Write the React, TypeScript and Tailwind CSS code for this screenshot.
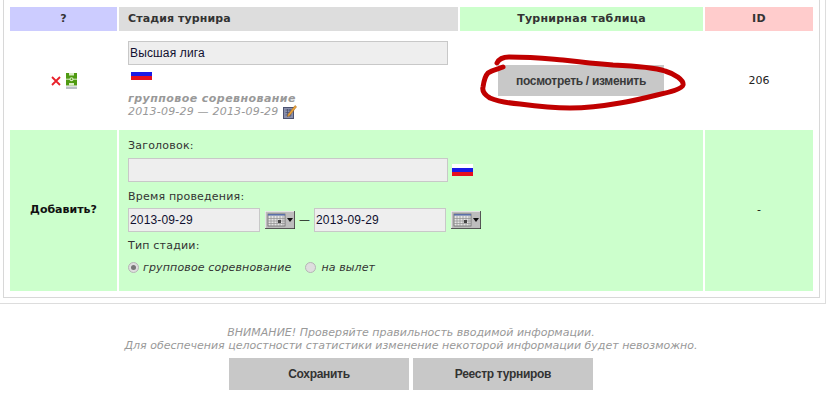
import React from "react";

const V = "[font-family:'DejaVu_Sans',Verdana,sans-serif]";
const A = "[font-family:'Liberation_Sans',Arial,sans-serif]";

function Flag() {
  return (
    <svg width="21" height="12" viewBox="0 0 21 12" className="block shrink-0">
      <rect width="21" height="4" fill="#fff" />
      <rect y="4" width="21" height="4" fill="#1a1ae6" />
      <rect y="8" width="21" height="4" fill="#e60f1e" />
    </svg>
  );
}

function Cal() {
  return (
    <svg width="30" height="18" viewBox="0 0 30 18" className="block shrink-0">
      <rect x="0" y="0" width="30" height="18" fill="#bdbdbd" />
      <path d="M0 0H30M0 0V18" stroke="#f0f0f0" strokeWidth="1.5" />
      <path d="M30 0V18H0" stroke="#333" strokeWidth="1.5" fill="none" />
      <rect x="3" y="3" width="17" height="12" fill="#e4e4e4" stroke="#6a6a6a" strokeWidth="0.8" />
      <rect x="3" y="3" width="17" height="1.6" fill="#5a6fa8" />
      <path d="M6 5v10M9 5v10M12 5v10M15 5v10M18 5v10M3 7.5h17M3 10h17M3 12.5h17" stroke="#8f8f8f" strokeWidth="0.7" />
      <rect x="13" y="9" width="3" height="3" fill="#444" />
      <path d="M22 7h6l-3 4z" fill="#111" />
    </svg>
  );
}

function Pitch() {
  return (
    <svg width="11" height="16" viewBox="0 0 11 16" className="block">
      <rect x="0" y="0" width="11" height="12.5" fill="#4f9a12" />
      <rect x="3" y="0" width="5" height="2.5" fill="#d9ecc4" />
      <rect x="3" y="10" width="5" height="2.5" fill="#d9ecc4" />
      <path d="M0 6.2h11" stroke="#d9ecc4" strokeWidth="1" />
      <circle cx="5.5" cy="6.2" r="2" fill="#d9ecc4" />
      <circle cx="5.5" cy="6.2" r="0.9" fill="#4f9a12" />
      <rect x="0" y="13.5" width="11" height="2.5" fill="#b9bfc4" />
    </svg>
  );
}

function Edit() {
  return (
    <svg width="14" height="15" viewBox="0 0 14 15" className="block shrink-0">
      <rect x="0.5" y="3.5" width="10" height="11" fill="#8a90ad" stroke="#4c5270" />
      <path d="M2.5 6h6M2.5 8.5h6M2.5 11h6M4.5 5v8M7 5v8" stroke="#454b68" strokeWidth="0.7" />
      <path d="M5 10.5 12 1.5l1.6 1.3-7 9-2.2 0.6z" fill="#e9a23b" stroke="#a5691c" strokeWidth="0.5" />
    </svg>
  );
}

function Radio({ on }: { on?: boolean }) {
  return (
    <span className="w-[11px] h-[11px] rounded-full border border-[#b5b5b5] bg-[#dedede] flex items-center justify-center shrink-0">
      {on && <span className="w-[5px] h-[5px] rounded-full bg-[#777]" />}
    </span>
  );
}

function Field({ value, className }: { value?: string; className: string }) {
  return (
    <div className={`${className} shrink-0 h-6 bg-[#eeeeee] border border-[#c8c8c8] pl-[1px] flex items-center text-[12px] tracking-[0.15px] text-[#101030] ${A}`}>
      {value}
    </div>
  );
}

export default function App() {
  return (
    <div className="w-[836px] h-[402px] overflow-hidden bg-white text-[#222]">
      <div className="w-[826px] h-[304px] border-r border-b border-[#dddddd]">
        <div className="ml-[3px] w-[817px] h-[298px] border-l border-r border-b border-[#d8d8d8] pt-[7px] pl-[6px]">
          <div className={`grid grid-cols-[107px_339px_243px_108px] grid-rows-[24px_95px_161px] gap-x-[2px] gap-y-[2px] ${V} text-[11px]`}>
            <div className="bg-[#ccccff] flex items-center justify-center pt-px font-bold text-[#333] tracking-[0.3px]">?</div>
            <div className="bg-[#dddddd] flex items-center pl-[9px] pt-px font-bold text-[#333] tracking-[0.1px]">Стадия турнира</div>
            <div className="bg-[#ccffcc] flex items-center justify-center pt-px font-bold text-[#333] tracking-[0.25px]">Турнирная таблица</div>
            <div className="bg-[#ffcccc] flex items-center justify-center pt-px font-bold text-[#333] tracking-[0.3px]">ID</div>

            <div className="flex items-center justify-center gap-[5px]">
              <svg width="10" height="10" viewBox="0 0 10 10" className="block"><path d="M1 1l8 8M9 1l-8 8" stroke="#e8202a" strokeWidth="1.8" /></svg>
              <Pitch />
            </div>
            <div className="pl-[9px] pt-[8px]">
              <Field value="Высшая лига" className="w-[320px]" />
              <div className="ml-[3px] mt-[3px]"><Flag /></div>
              <div className="mt-[12px] font-bold italic text-[#999] leading-[13px] tracking-[0.45px]">групповое соревнование</div>
              <div className="flex items-center gap-[5px] italic text-[#999] leading-[13px] -mt-[1px] tracking-[0.2px]">
                <span>2013-09-29 — 2013-09-29</span>
                <Edit />
              </div>
            </div>
            <div className="relative flex items-center justify-center">
              <div className={`-ml-[1px] w-[166px] h-[31px] bg-[#c8c8c8] flex items-center justify-center font-bold text-[#3a3a3a] text-[12px] ${A} tracking-[-0.3px]`}>
                посмотреть / изменить
              </div>
              <svg width="230" height="72" viewBox="0 0 230 72" className="absolute left-[15px] top-[10px]" fill="none">
                <path
                  d="M22 20C24 16 28 14 34 14C60 14 75 16 88 17C105 19 125 21 138 22C160 23 178 24 190 28C200 31 209 37 208 42C207 46 195 49 182 52C170 55 158 58 145 60C128 63 112 65 95 65C75 65 60 63 45 61C33 60 22 58 15 55C10 52 7 48 8 44C9 37 10 33 13 30C17 27 23 26 28 24"
                  stroke="#c00000"
                  strokeWidth="5"
                  strokeLinecap="round"
                  strokeLinejoin="round"
                />
              </svg>
            </div>
            <div className="flex items-center justify-center text-[#222] pt-[1px]">206</div>

            <div className="bg-[#ccffcc] flex items-center justify-center font-bold text-[#111]">Добавить?</div>
            <div className="col-span-2 bg-[#ccffcc] pl-[9px] pt-[9px] text-[#333] tracking-[0.2px]">
              <div className="leading-[13px]">Заголовок:</div>
              <div className="flex items-center gap-[4px] mt-[6px]">
                <Field className="w-[320px]" />
                <Flag />
              </div>
              <div className="leading-[13px] mt-[8px]">Время проведения:</div>
              <div className="flex items-center mt-[5px]">
                <Field value="2013-09-29" className="w-[132px]" />
                <span className="ml-[5px]"><Cal /></span>
                <span className="w-[19px] flex justify-center text-[#111]">—</span>
                <Field value="2013-09-29" className="w-[132px]" />
                <span className="ml-[5px]"><Cal /></span>
              </div>
              <div className="leading-[13px] mt-[7px]">Тип стадии:</div>
              <div className="flex items-center mt-[9px] italic leading-[13px] tracking-[0.15px]">
                <Radio on />
                <span className="ml-[4px]">групповое соревнование</span>
                <span className="ml-[14px]"><Radio /></span>
                <span className="ml-[5px] tracking-[0.1px]">на вылет</span>
              </div>
            </div>
            <div className="bg-[#ccffcc] flex items-center justify-center text-[#111]">-</div>
          </div>
        </div>
      </div>
      <div className={`mt-[22px] w-[822px] flex flex-col items-center ${V} text-[11px] italic text-[#999] leading-[13px]`}>
        <div>ВНИМАНИЕ! Проверяйте правильность вводимой информации.</div>
        <div>Для обеспечения целостности статистики изменение некоторой информации будет невозможно.</div>
        <div className={`flex gap-1 mt-[6px] not-italic font-bold text-[12px] text-[#333] ${A} tracking-[-0.3px]`}>
          <div className="w-[180px] h-[32px] bg-[#c8c8c8] flex items-center justify-center">Сохранить</div>
          <div className="w-[180px] h-[32px] bg-[#c8c8c8] flex items-center justify-center">Реестр турниров</div>
        </div>
      </div>
    </div>
  );
}
